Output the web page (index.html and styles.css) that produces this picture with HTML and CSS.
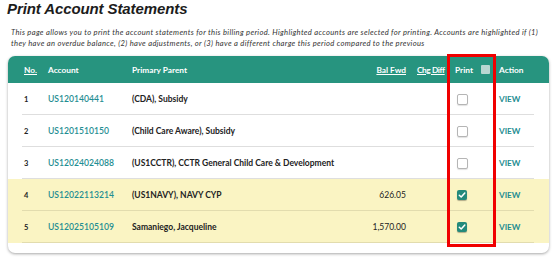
FILE: index.html
```html
<!DOCTYPE html>
<html>
<head>
<meta charset="utf-8">
<link rel="stylesheet" href="styles.css">
</head>
<body>
<div class="page">
  <h1 class="title">Print Account Statements</h1>
  <p class="desc">This page allows you to print the account statements for this billing period. Highlighted accounts are selected for printing. Accounts are highlighted if (1)<br>they have an overdue balance, (2) have adjustments, or (3) have a different charge this period compared to the previous</p>
  <div class="card">
    <div class="row head">
      <span class="c-no"><u>No.</u></span>
      <span class="c-acct">Account</span>
      <span class="c-parent">Primary Parent</span>
      <span class="c-bal"><u>Bal Fwd</u></span>
      <span class="c-chg"><u>Chg Diff</u></span>
      <span class="c-print">Print <i class="hbox"></i></span>
      <span class="c-act">Action</span>
    </div>
    <div class="row">
      <span class="c-no">1</span>
      <span class="c-acct link">US120140441</span>
      <span class="c-parent">(CDA), Subsidy</span>
      <span class="c-bal"></span>
      <span class="c-chg"></span>
      <span class="c-print"><i class="box"></i></span>
      <span class="c-act link">VIEW</span>
    </div>
    <div class="row">
      <span class="c-no">2</span>
      <span class="c-acct link">US1201510150</span>
      <span class="c-parent">(Child Care Aware), Subsidy</span>
      <span class="c-bal"></span>
      <span class="c-chg"></span>
      <span class="c-print"><i class="box"></i></span>
      <span class="c-act link">VIEW</span>
    </div>
    <div class="row">
      <span class="c-no">3</span>
      <span class="c-acct link">US12024024088</span>
      <span class="c-parent">(US1CCTR), CCTR General Child Care &amp; Development</span>
      <span class="c-bal"></span>
      <span class="c-chg"></span>
      <span class="c-print"><i class="box"></i></span>
      <span class="c-act link">VIEW</span>
    </div>
    <div class="row hl">
      <span class="c-no">4</span>
      <span class="c-acct link">US12022113214</span>
      <span class="c-parent">(US1NAVY), NAVY CYP</span>
      <span class="c-bal">626.05</span>
      <span class="c-chg"></span>
      <span class="c-print"><i class="box on"><svg viewBox="0 0 10 10" width="10" height="10"><path d="M2.3 5.2 L4.2 7 L7.8 3" fill="none" stroke="#fff" stroke-width="1.5" stroke-linecap="round" stroke-linejoin="round"/></svg></i></span>
      <span class="c-act link">VIEW</span>
    </div>
    <div class="row hl">
      <span class="c-no">5</span>
      <span class="c-acct link">US12025105109</span>
      <span class="c-parent">Samaniego, Jacqueline</span>
      <span class="c-bal">1,570.00</span>
      <span class="c-chg"></span>
      <span class="c-print"><i class="box on"><svg viewBox="0 0 10 10" width="10" height="10"><path d="M2.3 5.2 L4.2 7 L7.8 3" fill="none" stroke="#fff" stroke-width="1.5" stroke-linecap="round" stroke-linejoin="round"/></svg></i></span>
      <span class="c-act link">VIEW</span>
    </div>
  </div>
  <div class="redbox"></div>
</div>
</body>
</html>
```
FILE: styles.css
```css
html, body { margin: 0; padding: 0; background: #fff; }
.page {
  position: relative;
  width: 559px;
  height: 259px;
  overflow: hidden;
}
.title {
  margin: 0 0 0 7px;
  font-family: "Liberation Sans", Arial, sans-serif;
  font-style: italic;
  font-weight: bold;
  font-size: 15px;
  line-height: 18px;
  color: #1c1c1c;
  letter-spacing: -0.1px;
}
.desc {
  margin: 9px 0 0 11px;
  white-space: nowrap;
  font-family: Lato, sans-serif;
  font-style: italic;
  font-size: 7.6px;
  letter-spacing: 0.34px;
  line-height: 11px;
  color: #333;
}
.card {
  margin: 7px 0 0 8px;
  width: 541px;
  background: #fff;
  border-radius: 7px;
  box-shadow: 0 1px 3px rgba(0,0,0,0.35);
  padding-bottom: 10px;
  overflow: hidden;
  font-family: Lato, sans-serif;
}
.row {
  display: grid;
  grid-template-columns: 24px 84px 1fr 36px 49px 44px 50px;
  align-items: center;
  height: 32px;
  padding-left: 16px;
  font-size: 8.5px;
  color: #222;
  background: linear-gradient(#dedede, #dedede) no-repeat 14px 100% / 512px 1px, #fff;
}
.row.hl {
  background: linear-gradient(#e2dcae, #e2dcae) no-repeat 14px 100% / 512px 1px, #faf4c3;
}
.row.head {
  height: 27px;
  background: #27947f;
  color: #fff;
  font-weight: 700;
  font-size: 8.3px;
}
.head u { text-decoration-thickness: 1px; text-underline-offset: 1px; }
.c-no { font-weight: 700; font-size: 7.5px; }
.head .c-no { font-size: 8.3px; }
.c-parent { font-weight: 700; }
.c-bal { text-align: right; white-space: nowrap; }
.c-chg { padding-left: 11px; white-space: nowrap; }
.head .c-chg { letter-spacing: -0.4px; }
.c-print { display: flex; align-items: center; }
.link { color: #1f8e92; font-weight: 600; font-size: 8.6px; }
.c-act.link { font-weight: 700; font-size: 8.2px; }
.hbox {
  display: inline-block;
  width: 9px;
  height: 9px;
  margin-left: 8px;
  background: #b9d7d1;
  border-radius: 1px;
}
.box {
  display: block;
  width: 9px;
  height: 9px;
  margin-left: 2px;
  border: 1px solid #b5b5b5;
  border-radius: 2px;
  background: #fff;
  box-shadow: 0 1px 1px rgba(0,0,0,0.12);
}
.box.on {
  width: 10px;
  height: 10px;
  border: none;
  background: #238a7b;
  box-shadow: 0 1px 1px rgba(0,0,0,0.3);
}
.box svg { display: block; }
.redbox {
  position: absolute;
  left: 447px;
  top: 54px;
  width: 43px;
  height: 187px;
  border: 3px solid #f00000;
}
```
